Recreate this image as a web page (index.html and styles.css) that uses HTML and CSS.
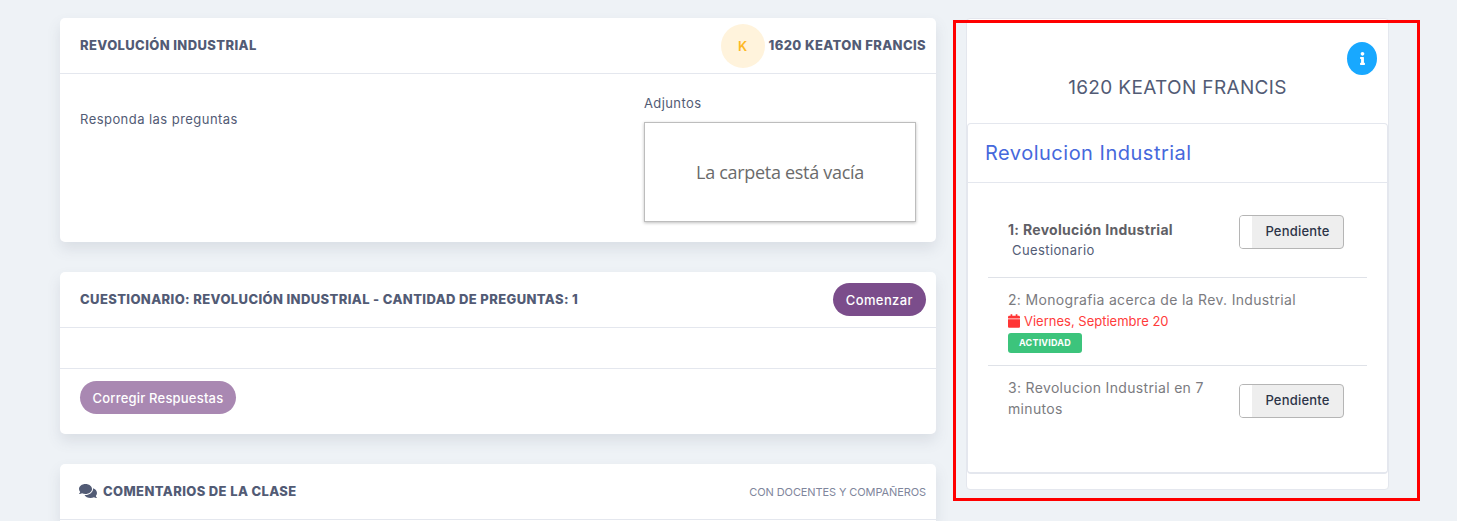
FILE: index.html
```html
<!DOCTYPE html>
<html lang="es">
<head>
<meta charset="utf-8">
<title>Revolución Industrial</title>
<link rel="stylesheet" href="styles.css">
</head>
<body>
<main class="page">
  <section class="col-main">
    <article class="card card-intro">
      <header class="card-head">
        <h2 class="card-title">REVOLUCIÓN INDUSTRIAL</h2>
        <div class="author">
          <span class="avatar">K</span>
          <span class="card-title">1620 KEATON FRANCIS</span>
        </div>
      </header>
      <div class="intro-body">
        <p class="intro-text">Responda las preguntas</p>
        <div class="attach">
          <div class="attach-label">Adjuntos</div>
          <div class="folder">La carpeta está vacía</div>
        </div>
      </div>
    </article>

    <article class="card">
      <header class="card-head">
        <h2 class="card-title">CUESTIONARIO: REVOLUCIÓN INDUSTRIAL - CANTIDAD DE PREGUNTAS: 1</h2>
        <button class="pill pill-start">Comenzar</button>
      </header>
      <div class="quiz-empty"></div>
      <div class="quiz-foot">
        <button class="pill pill-fix">Corregir Respuestas</button>
      </div>
    </article>

    <article class="card card-last">
      <header class="card-head">
        <h2 class="card-title with-icon">
          <svg class="icon-comments" viewBox="0 0 576 512" aria-hidden="true"><path d="M416 192c0-88.4-93.1-160-208-160S0 103.6 0 192c0 34.3 14.1 65.9 38 92-13.4 30.2-35.5 54.2-35.8 54.5-2.2 2.3-2.8 5.7-1.5 8.7S4.8 352 8 352c36.6 0 66.9-12.3 88.7-25 32.2 15.7 70.3 25 111.3 25 114.9 0 208-71.6 208-160zm122 220c23.9-26 38-57.7 38-92 0-66.9-53.5-124.2-129.3-148.1.9 6.6 1.3 13.3 1.3 20.1 0 105.9-107.7 192-240 192-10.8 0-21.3-.8-31.7-1.9C207.8 439.6 281.8 480 368 480c41 0 79.1-9.2 111.3-25 21.8 12.7 52.1 25 88.7 25 3.2 0 6.1-1.9 7.3-4.8 1.3-2.9.7-6.3-1.5-8.7-.3-.3-22.4-24.2-35.8-54.5z"/></svg>
          COMENTARIOS DE LA CLASE
        </h2>
        <span class="head-note">CON DOCENTES Y COMPAÑEROS</span>
      </header>
      <div class="comments-body"></div>
    </article>
  </section>

  <aside class="col-side">
    <div class="side-top">
      <button class="info-btn" aria-label="Información">
        <svg class="icon-info" viewBox="0 0 192 512" aria-hidden="true"><path d="M20 424.229h20V279.771H20c-11.046 0-20-8.954-20-20V212c0-11.046 8.954-20 20-20h112c11.046 0 20 8.954 20 20v212.229h20c11.046 0 20 8.954 20 20V492c0 11.046-8.954 20-20 20H20c-11.046 0-20-8.954-20-20v-47.771c0-11.046 8.954-20 20-20zM96 0C56.235 0 24 32.235 24 72s32.235 72 72 72 72-32.235 72-72S135.764 0 96 0z"/></svg>
      </button>
      <h1 class="side-name">1620 KEATON FRANCIS</h1>
    </div>
    <div class="unit">
      <h3 class="unit-title">Revolucion Industrial</h3>
      <ul class="unit-list">
        <li class="row row-one">
          <div class="row-text">
            <div class="row-strong">1: Revolución Industrial</div>
            <div class="row-sub">Cuestionario</div>
          </div>
          <div class="status"><span class="status-tip"></span><span class="status-label">Pendiente</span></div>
        </li>
        <li class="row row-two">
          <div class="row-wide">
            <div class="row-name">2: Monografia acerca de la Rev. Industrial</div>
            <div class="row-date">
              <svg class="icon-cal" viewBox="0 0 448 512" aria-hidden="true"><path d="M12 192h424c6.6 0 12 5.4 12 12v260c0 26.5-21.5 48-48 48H48c-26.5 0-48-21.5-48-48V204c0-6.6 5.4-12 12-12zm436-44v-36c0-26.5-21.5-48-48-48h-48V12c0-6.6-5.4-12-12-12h-40c-6.6 0-12 5.4-12 12v52H160V12c0-6.6-5.4-12-12-12h-40c-6.6 0-12 5.4-12 12v52H48C21.5 64 0 85.5 0 112v36c0 6.6 5.4 12 12 12h424c6.6 0 12-5.4 12-12z"/></svg>
              Viernes, Septiembre 20
            </div>
            <span class="badge">ACTIVIDAD</span>
          </div>
        </li>
        <li class="row row-three">
          <div class="row-text">
            <div class="row-name">3: Revolucion Industrial en 7 minutos</div>
          </div>
          <div class="status"><span class="status-tip"></span><span class="status-label">Pendiente</span></div>
        </li>
      </ul>
    </div>
  </aside>
</main>
<div class="red-frame"></div>
</body>
</html>
```
FILE: styles.css
```css
* { box-sizing: border-box; }
html, body { margin: 0; height: 521px; overflow: hidden; }
body {
  background: #eef2f6;
  font-family: "Inter", "Liberation Sans", sans-serif;
  color: #525b75;
  position: relative;
}
.page {
  display: flex;
  align-items: flex-start;
  gap: 30px;
  padding: 18px 0 0 60px;
}
.col-main {
  width: 876px;
  flex: none;
  display: flex;
  flex-direction: column;
  gap: 30px;
}
.card {
  background: #fff;
  border-radius: 5px;
  box-shadow: 0 7px 14px rgba(82, 91, 117, 0.13);
}
.card-intro { height: 224px; }
.card-last { border-radius: 5px 5px 0 0; }
.card-head {
  height: 56px;
  padding: 0 10px 0 20px;
  display: flex;
  align-items: center;
  justify-content: space-between;
  border-bottom: 1px solid #e4e7ee;
}
.card-title {
  margin: 0 0 2px;
  font-size: 13px;
  font-weight: 800;
  letter-spacing: 0.38px;
  color: #525b75;
}
.with-icon { display: flex; align-items: center; gap: 6px; }
.icon-comments { width: 18px; height: 16px; margin-left: -1px; fill: #525b75; }
.author { display: flex; align-items: center; gap: 4px; }
.avatar {
  width: 44px;
  height: 44px;
  border-radius: 50%;
  background: #fff3dc;
  color: #fdb824;
  font-size: 13px;
  font-weight: 600;
  display: flex;
  align-items: center;
  justify-content: center;
}
.intro-body {
  display: flex;
  justify-content: space-between;
  padding: 19px 20px 0;
}
.intro-text { margin: 18px 0 0; font-size: 13px; letter-spacing: 0.45px; color: #525b75; }
.attach { width: 272px; }
.attach-label { font-size: 13px; line-height: 20px; letter-spacing: 0.4px; color: #525b75; margin-bottom: 9px; }
.folder {
  height: 100px;
  border: 1px solid #bdbdbd;
  box-shadow: 0 1px 3px rgba(0, 0, 0, 0.25);
  display: flex;
  align-items: center;
  justify-content: center;
  font-family: "Open Sans", sans-serif;
  font-size: 18px;
  letter-spacing: -0.3px;
  color: #6b6b6b;
}
.pill {
  border: 0;
  border-radius: 17px;
  height: 33px;
  font-family: inherit;
  font-size: 13px;
  font-weight: 500;
  color: #fff;
}
.pill-start { background: #7b4d8b; padding: 0 13px; letter-spacing: 0.4px; }
.pill-fix { background: #a988b2; padding: 0 12.5px; letter-spacing: 0.2px; }
.quiz-empty { height: 41px; border-bottom: 1px solid #e4e7ee; }
.quiz-foot { padding: 12px 20px 21px; height: 65px; }
.head-note { font-size: 11px; letter-spacing: -0.1px; color: #7f869c; }
.comments-body { height: 1px; }

.col-side {
  width: 423px;
  flex: none;
  height: 472px;
  background: #fff;
  border: 1px solid #e4e7ee;
  border-radius: 4px;
}
.side-top {
  height: 104px;
  position: relative;
  text-align: center;
}
.info-btn {
  position: absolute;
  top: 23px;
  right: 11px;
  width: 30px;
  height: 33px;
  border: 0;
  padding: 0;
  border-radius: 50%;
  background: #18a8ff;
  display: flex;
  align-items: center;
  justify-content: center;
}
.icon-info { width: 5px; height: 13px; fill: #fff; }
.side-name {
  margin: 0;
  padding-top: 56px;
  font-size: 19px;
  line-height: 26px;
  font-weight: 400;
  letter-spacing: 0.35px;
  color: #525b75;
}
.unit {
  height: 351px;
  background: #fff;
  border: 1px solid #e4e7ee;
  border-bottom-width: 2px;
  border-radius: 4px;
}
.unit-title {
  margin: 0;
  height: 59px;
  padding: 0 17px;
  display: flex;
  align-items: center;
  font-size: 20px;
  font-weight: 400;
  letter-spacing: 0.5px;
  color: #4668dc;
  border-bottom: 1px solid #e4e7ee;
}
.unit-list {
  list-style: none;
  margin: 0 20px;
  padding: 20px 0 0;
}
.row {
  display: flex;
  justify-content: space-between;
  padding: 0 23px 0 20px;
  border-bottom: 1px solid #dfe2e8;
}
.row-three { border-bottom: 0; }
.row-one { height: 75px; padding-top: 12px; }
.row-two { height: 88px; padding-top: 11px; }
.row-three { padding-top: 18px; }
.row-text { width: 212px; }
.row-one .row-text { padding-top: 4px; }
.row-strong { font-size: 14px; line-height: 21px; font-weight: 700; color: #5f5f66; letter-spacing: 0.3px; }
.row-sub { font-size: 13px; line-height: 20px; padding-left: 4px; letter-spacing: 0.4px; color: #525b75; }
.row-name { font-size: 14px; line-height: 21px; letter-spacing: 0.33px; color: #7b7b80; }
.row-three .row-name { margin-top: -7px; }
.row-date {
  display: flex;
  align-items: center;
  gap: 4px;
  margin-top: 1px;
  font-size: 13px;
  line-height: 20px;
  color: #ff3b3b;
}
.icon-cal { width: 12px; height: 14px; fill: #ff3535; }
.badge {
  display: block;
  width: 74px;
  height: 20px;
  margin-top: 2px;
  border-radius: 3px;
  background: #3cc47c;
  color: #fff;
  font-size: 9px;
  font-weight: 700;
  letter-spacing: 0.2px;
  line-height: 20px;
  text-align: center;
}
.status {
  width: 105px;
  height: 34px;
  flex: none;
  display: flex;
  border: 1px solid #b5b5b5;
  border-radius: 4px;
  overflow: hidden;
  background: #eeeeee;
}
.status-tip { width: 12px; background: #fff; }
.status-label {
  flex: 1;
  text-align: center;
  font-size: 13px;
  line-height: 31px;
  font-weight: 500;
  letter-spacing: 0.2px;
  color: #2c3448;
}
.red-frame {
  position: absolute;
  left: 953px;
  top: 20px;
  width: 467px;
  height: 481px;
  border: 3px solid #ff0000;
  pointer-events: none;
}
```
